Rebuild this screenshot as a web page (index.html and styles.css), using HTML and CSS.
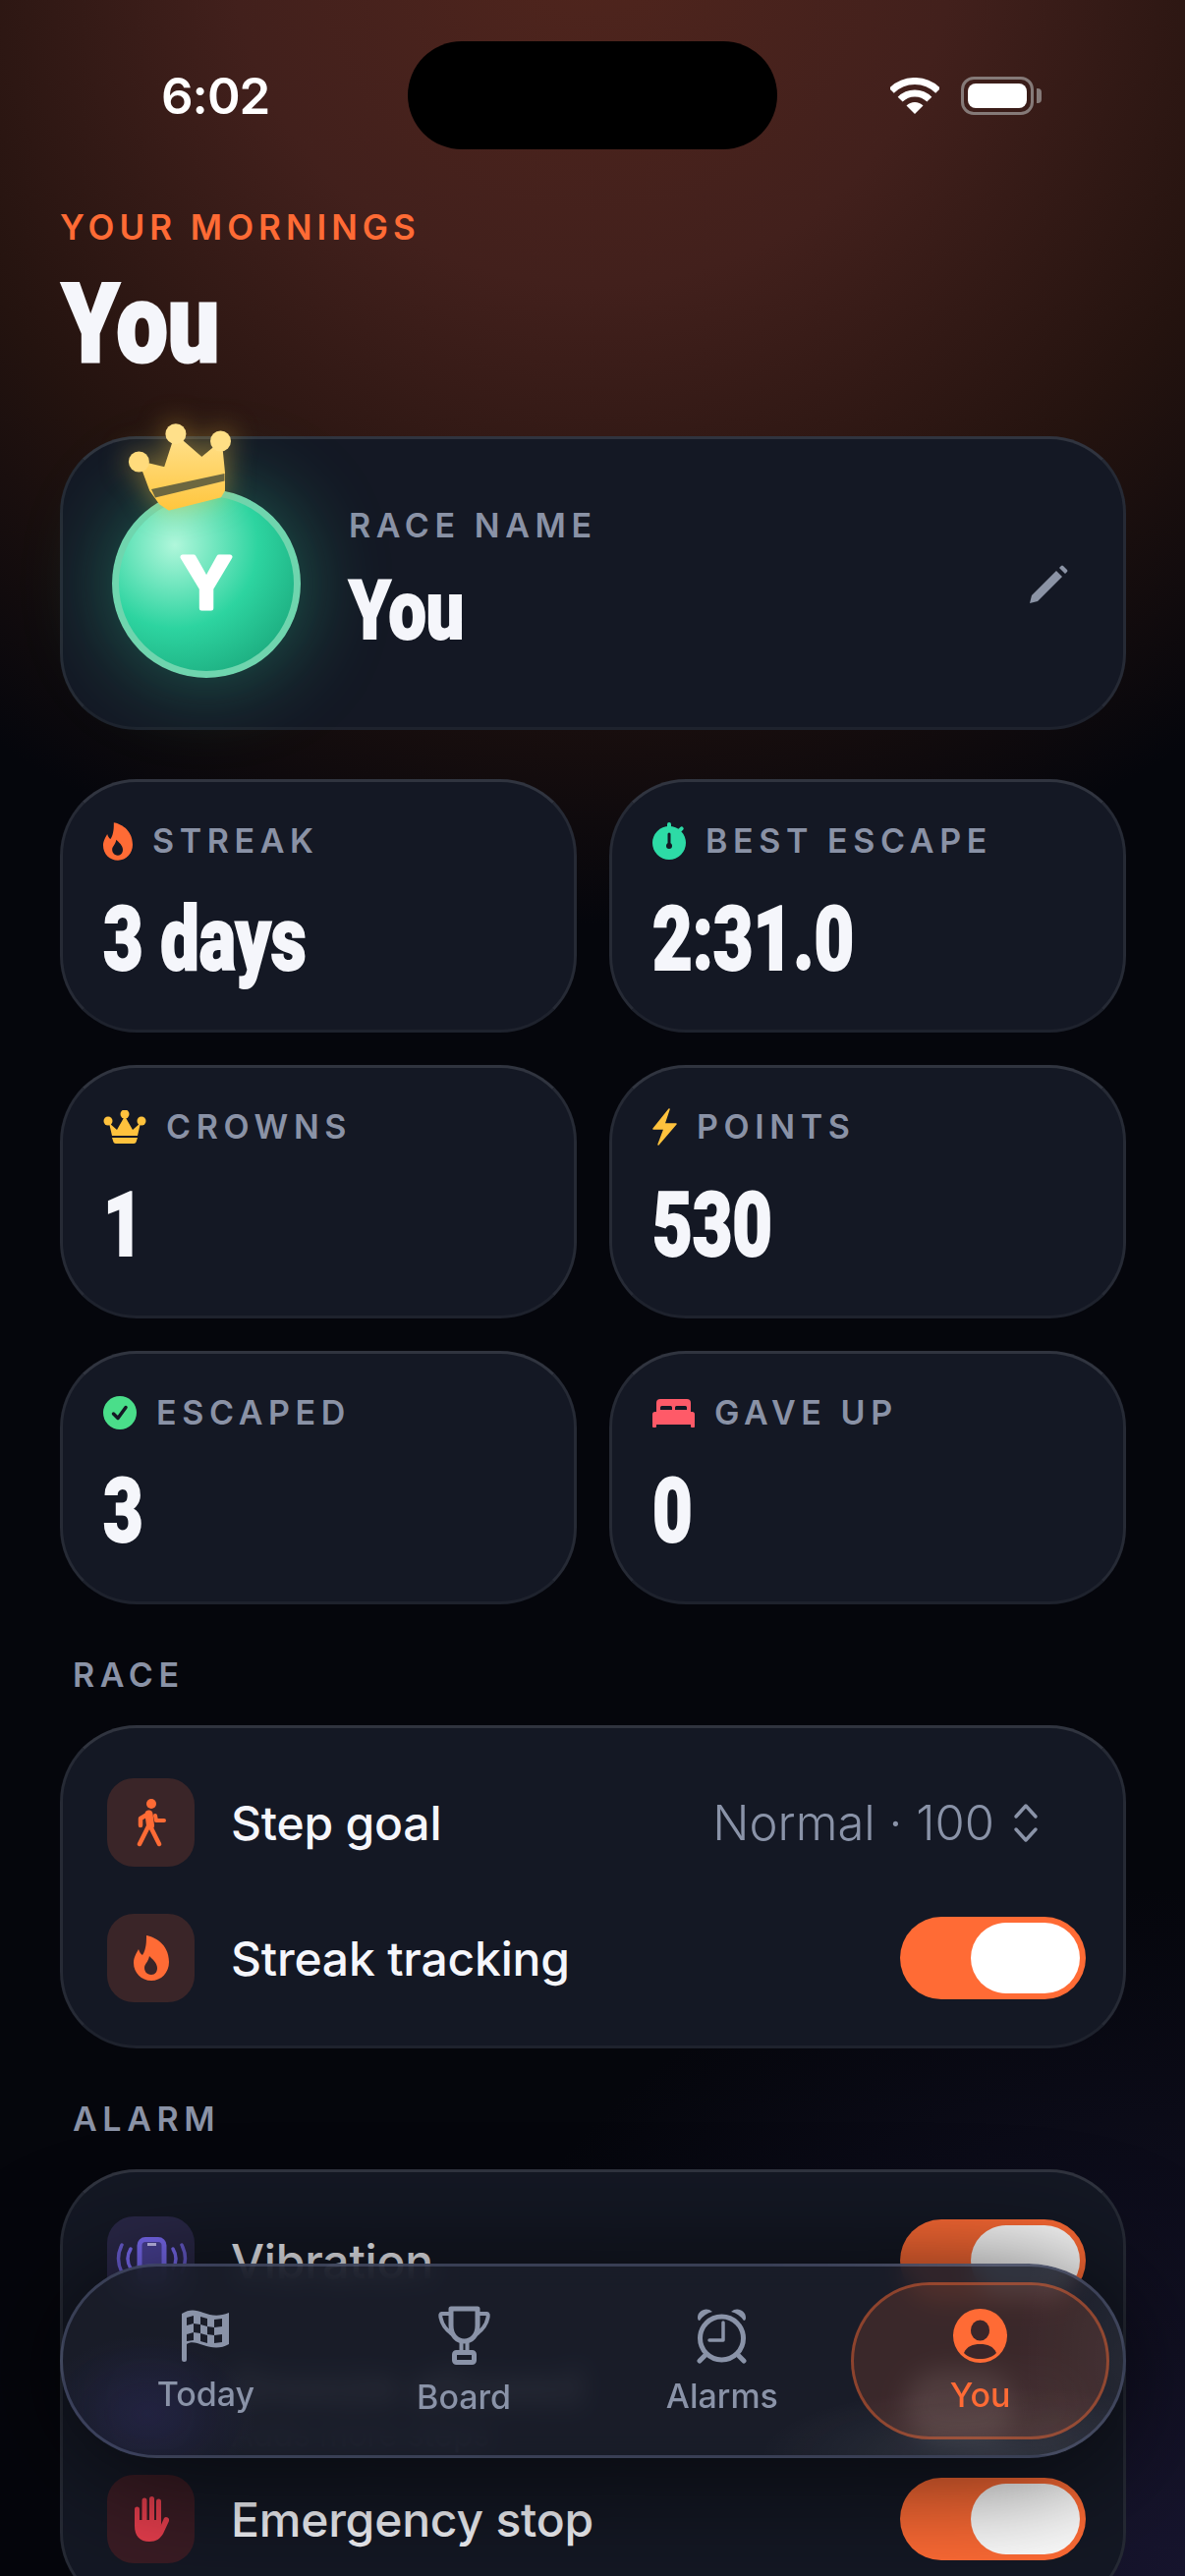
FILE: index.html
```html
<!DOCTYPE html>
<html>
	<head>
		<meta charset="utf-8">
		<title>You</title>
		<link rel="stylesheet" href="styles.css">
	</head>
	<body>
		<div class="screen">
			<div class="status">
				<span class="time">6:02</span>
				<span class="island"></span>
				<span class="status-icons">
					<svg width="50" height="37" viewBox="0 0 50 37" fill="none" stroke="#fff" stroke-width="7"><path d="M1.3 13.3A33.5 33.5 0 0 1 48.7 13.3"/><path d="M10.15 22.15A21 21 0 0 1 39.85 22.15"/><path d="M25 37L16.5 28.5A12 12 0 0 1 33.5 28.5Z" fill="#fff" stroke="none"/></svg>
					<span class="battery"><span class="battery-fill"></span></span>
				</span>
			</div>

			<div class="content">
				<div class="eyebrow">YOUR MORNINGS</div>
				<h1 class="title"><span class="squeeze">You</span></h1>

				<div class="card hero">
					<div class="avatar">
						<svg class="avatar-letter" width="100" height="100" viewBox="0 0 100 100"><text x="50" y="75" text-anchor="middle">Y</text></svg>
						<svg class="crown" width="120" height="100" viewBox="120 430 120 100">
							<defs><linearGradient id="gold" x1="0" y1="0" x2="0" y2="1"><stop offset="0" stop-color="#ffe08a"/><stop offset="1" stop-color="#ffc63f"/></linearGradient></defs>
							<path fill="url(#gold)" stroke="url(#gold)" stroke-width="3" stroke-linejoin="round" d="M143.3 472L168.2 478L178.9 445L205.3 468L224.5 452L227.5 482V500L224 506L172 519L163 513L153.7 500Z"/>
							<circle cx="141.4" cy="471" r="10.5" fill="#ffdb7c"/>
							<circle cx="178.9" cy="442.7" r="10.5" fill="#ffe08a"/>
							<circle cx="224.5" cy="450" r="10.5" fill="#ffdf85"/>
							<path fill="#6c6740" d="M154 499L228.5 483V490.5L158 507.5Z"/>
						</svg>
					</div>
					<div class="hero-text">
						<div class="label">RACE NAME</div>
						<div class="hero-name"><span class="squeeze">You</span></div>
					</div>
					<svg class="pencil" width="40" height="40" viewBox="0 0 40 40" fill="#8b93a5"><path d="M0 40L2 32L27 7L33 13L8 38Z"/><path d="M30 4L32 2Q33 1 34 2L38 6Q39 7 38 8L36 10Z"/></svg>
				</div>

				<div class="stats">
					<div class="card stat">
						<div class="stat-head">
							<svg width="30" height="39" viewBox="0 0 36 46" fill="#ff6b35" fill-rule="evenodd"><path d="M13 0C20 1 36 8 36 27C36 38 28 46 18 46C8 46 0 38 0 28C0 22 3 18 5 14C6 17 7 19 9 20C13 14 13 6 13 0ZM18 40C13 40 11 36 11 33C11 29 15 27 16 21C19 24 24 28 24 33C24 37 22 40 18 40Z"/></svg>
							<span class="label">STREAK</span>
						</div>
						<div class="value"><span class="squeeze">3 days</span></div>
					</div>
					<div class="card stat">
						<div class="stat-head">
							<svg width="34" height="38" viewBox="0 0 34 38"><circle cx="17" cy="21" r="17" fill="#2ddba6"/><rect x="15" y="0" width="4" height="7" rx="2" fill="#2ddba6"/><rect x="27" y="4" width="4" height="7" rx="2" fill="#2ddba6" transform="rotate(45 29 7)"/><path d="M17 12V23" stroke="#141824" stroke-width="3" stroke-linecap="round"/><circle cx="17" cy="24" r="3" fill="#141824"/></svg>
							<span class="label">BEST ESCAPE</span>
						</div>
						<div class="value"><span class="squeeze">2:31.0</span></div>
					</div>
					<div class="card stat">
						<div class="stat-head">
							<svg width="44" height="34" viewBox="0 0 44 34" fill="#ffc23d"><circle cx="5" cy="11" r="4.5"/><circle cx="22" cy="4" r="4.5"/><circle cx="39" cy="11" r="4.5"/><path d="M6 13L14 20L22 6L30 20L38 13L35 26H9Z"/><path d="M9 28H35L34 31Q33.500 34 31 34H13Q10.500 34 10 31Z"/></svg>
							<span class="label">CROWNS</span>
						</div>
						<div class="value"><span class="squeeze">1</span></div>
					</div>
					<div class="card stat">
						<div class="stat-head">
							<svg width="25" height="38" viewBox="0 0 25 38" fill="#ffc23d" stroke="#ffc23d" stroke-width="1.500" stroke-linejoin="round"><path d="M17 1L1 21H12L6 37L24 16H12Z"/></svg>
							<span class="label">POINTS</span>
						</div>
						<div class="value"><span class="squeeze">530</span></div>
					</div>
					<div class="card stat">
						<div class="stat-head">
							<svg width="34" height="34" viewBox="0 0 34 34"><circle cx="17" cy="17" r="17" fill="#4ade8a"/><path d="M10.500 18L15 22.500L23 11.500" fill="none" stroke="#141824" stroke-width="3.500" stroke-linecap="round" stroke-linejoin="round"/></svg>
							<span class="label">ESCAPED</span>
						</div>
						<div class="value"><span class="squeeze">3</span></div>
					</div>
					<div class="card stat">
						<div class="stat-head">
							<svg width="43" height="29" viewBox="0 0 43 29" fill="#ff5a68"><path d="M8 0H35A4 4 0 0 1 39 4V13H4V4A4 4 0 0 1 8 0Z"/><path d="M8 11V8.500Q8 7 9.500 7H18.500Q20 7 20 8.500V11ZM23 11V8.500Q23 7 24.500 7H33.500Q35 7 35 8.500V11Z" fill="#141824"/><rect x="0" y="13" width="43" height="13" rx="2.500"/><rect x="0" y="24" width="4" height="5" rx="1"/><rect x="39" y="24" width="4" height="5" rx="1"/></svg>
							<span class="label">GAVE UP</span>
						</div>
						<div class="value"><span class="squeeze">0</span></div>
					</div>
				</div>

				<div class="label section-label">RACE</div>
				<div class="card list">
					<div class="row">
						<span class="tile tile-orange">
							<svg width="30" height="49" viewBox="0 0 30 49" fill="none" stroke="#ff6b35" stroke-linecap="round" stroke-linejoin="round"><circle cx="15" cy="5" r="5" fill="#ff6b35" stroke="none"/><path d="M12.500 15.500L14 27" stroke-width="8"/><path d="M9 17L4 20V27" stroke-width="4.500"/><path d="M19 17L20 22H28" stroke-width="4"/><path d="M12 28L3 46" stroke-width="4.500"/><path d="M14 28L23 46" stroke-width="4.500"/></svg>
						</span>
						<span class="row-name">Step goal</span>
						<span class="row-value">Normal · 100</span>
						<svg class="chevrons" width="30" height="41" viewBox="0 0 30 41" fill="none" stroke="#8a93a8" stroke-width="3.500" stroke-linecap="round" stroke-linejoin="round"><path d="M5 14L15 3L25 14"/><path d="M5 27L15 38L25 27"/></svg>
					</div>
					<div class="row">
						<span class="tile tile-orange">
							<svg width="36" height="46" viewBox="0 0 36 46" fill="#ff6b35" fill-rule="evenodd"><path d="M13 0C20 1 36 8 36 27C36 38 28 46 18 46C8 46 0 38 0 28C0 22 3 18 5 14C6 17 7 19 9 20C13 14 13 6 13 0ZM18 40C13 40 11 36 11 33C11 29 15 27 16 21C19 24 24 28 24 33C24 37 22 40 18 40Z"/></svg>
						</span>
						<span class="row-name">Streak tracking</span>
						<span class="toggle"><span class="thumb"></span></span>
					</div>
				</div>

				<div class="label section-label">ALARM</div>
				<div class="card list list-alarm">
					<div class="row">
						<span class="tile tile-purple">
							<svg width="74" height="48" viewBox="0 0 74 48" fill="none" stroke="#7b6cf6"><rect x="25" y="2.500" width="25" height="44" rx="6" fill="#4b4399" stroke-width="5"/><path d="M33 7.500H42" stroke="#c9c4f5" stroke-width="3"/><path d="M16 12Q10 22 16 32M59 32Q65 22 59 12" stroke-width="3.500" stroke-linecap="round"/><path d="M7 8Q0 22 7 36M68 36Q75 22 68 8" stroke-width="3.500" stroke-linecap="round" opacity=".8"/></svg>
						</span>
						<span class="row-name">Vibration</span>
						<span class="toggle"><span class="thumb"></span></span>
					</div>
					<div class="row row-middle">
						<span class="tile tile-purple"></span>
						<span class="row-text">
							<span class="row-name">Snooze allowed</span>
							<span class="row-sub">Adds more steps</span>
						</span>
						<span class="toggle toggle-off"><span class="thumb"></span></span>
					</div>
					<div class="row">
						<span class="tile tile-red">
							<svg width="36" height="46" viewBox="0 0 36 46" fill="#e63e4d" stroke-linecap="round"><path d="M1 24H27.500V30L31 22A3 3 0 0 1 36 25L30 38C27 43 23 46 16 46C6 46 1 40 1 30Z"/><path d="M3.500 13V28M11 4V25M18.500 2.500V25M25.500 5V28" stroke="#e63e4d" stroke-width="5"/></svg>
						</span>
						<span class="row-name">Emergency stop</span>
						<span class="toggle"><span class="thumb"></span></span>
					</div>
				</div>
			</div>

			<div class="nav">
				<div class="tab">
					<svg width="48" height="53" viewBox="0 0 48 53"><path d="M0 4C8 -1 14 0 22 3C30 6 38 7 48 3V35C40 40 30 39 22 36C14 33 9 32 5 35V50.500A2.500 2.500 0 0 1 0 50.500Z" fill="#8a93a8"/><path fill="#1a1d29" d="M5 8l7-2v8l-7 2zM19 7l7 2v8l-7-2zM33 10l8-1v8l-8 1zM12 14l7 1v9l-7-1zM26 17l7 1v8l-7-1zM19 24l7 2v8l-7-2zM33 26l8-1v8l-8 1zM5 25l7-2v8l-7 1z"/></svg>
					<span>Today</span>
				</div>
				<div class="tab">
					<svg width="53" height="60" viewBox="0 0 53 60" fill="none" stroke="#8a93a8" stroke-width="5" stroke-linejoin="round"><path d="M13 3H40V20C40 30 34 36 26.500 36C19 36 13 30 13 20Z"/><path d="M13 8H3.500C2.500 8 2 9 2.500 12C4 20 8 25 16 30M40 8H49.500C50.500 8 51 9 50.500 12C49 20 45 25 37 30" stroke-width="4"/><path d="M23.500 36V48M29.500 36V48" stroke-width="4"/><rect x="16.500" y="47.500" width="20" height="10" rx="2"/></svg>
					<span>Board</span>
				</div>
				<div class="tab">
					<svg width="51" height="57" viewBox="0 0 51 57" fill="none" stroke="#8a93a8" stroke-linecap="round" stroke-linejoin="round"><circle cx="25.500" cy="31" r="22" stroke-width="5"/><path d="M27 15V33H13" stroke-width="3.500"/><path d="M8 49L3 54M43 49L48 54" stroke-width="5"/><path d="M1 10C1 4 7 0 13 2L16 4Q8 6 3 13Q1 13 1 10ZM50 10C50 4 44 0 38 2L35 4Q43 6 48 13Q50 13 50 10Z" fill="#8a93a8" stroke="none"/></svg>
					<span>Alarms</span>
				</div>
				<div class="tab tab-active">
					<svg width="55" height="55" viewBox="0 0 55 55"><circle cx="27.500" cy="27.500" r="27.500" fill="#ff6b35"/><ellipse cx="27.500" cy="22" rx="9.500" ry="10.500" fill="#3c2629"/><path d="M11 45C14 38 20 36 27.500 36C35 36 41 38 44 45C40 49 34 51 27.500 51C21 51 15 49 11 45Z" fill="#3c2629"/></svg>
					<span>You</span>
				</div>
			</div>
		</div>
	</body>
</html>
```

FILE: styles.css
```css
*{margin: 0;padding: 0;box-sizing: border-box;}
html,body{
	width: 1206px;
	height: 2622px;
	overflow: hidden;
	background: #05060c;
}
body{
	font-family: Inter, "Noto Sans", sans-serif;
	color: #f5f6fb;
}
.screen{
	position: relative;
	width: 1206px;
	height: 2622px;
	overflow: hidden;
	background:
		radial-gradient(ellipse 1050px 1000px at 50% -60px, #50251d 0%, #42201c 35%, #24130f 68%, rgba(10,8,12,0) 100%),
		radial-gradient(ellipse 800px 700px at 100% 100%, #17152e 0%, rgba(20,18,40,0) 100%),
		#05060c;
}

/* status bar */
.status{
	display: grid;
	grid-template-columns: 1fr 376px 1fr;
	align-items: center;
	padding-top: 42px;
	height: 152px;
}
.time{
	font-size: 51px;
	font-weight: 600;
	letter-spacing: -1px;
	color: #fff;
	padding-left: 164px;
}
.island{
	height: 110px;
	border-radius: 55px;
	background: #000;
}
.status-icons{
	display: flex;
	align-items: center;
	gap: 22px;
	padding-left: 115px;
}
.battery{
	position: relative;
	width: 74px;
	height: 39px;
	padding: 4px;
	border: 3px solid #857a78;
	border-radius: 13px;
}
.battery:after{
	content: "";
	position: absolute;
	right: -11px;
	top: 9px;
	width: 5px;
	height: 15px;
	border-radius: 0 4px 4px 0;
	background: #857a78;
}
.battery-fill{
	display: block;
	height: 100%;
	border-radius: 8px;
	background: #fff;
}

.content{
	padding: 0 60px 0 61px;
}
.eyebrow{
	margin-top: 58px;
	font-size: 35px;
	line-height: 42px;
	font-weight: 600;
	letter-spacing: 5px;
	color: #ff6b35;
}
.squeeze{
	display: inline-block;
	font-family: Roboto, "Liberation Sans", sans-serif;
	font-weight: 900;
	transform-origin: left center;
	transform: scaleX(.78);
	white-space: nowrap;
	-webkit-text-stroke: 2px #f5f6fb;
}
.title{
	margin-top: 12px;
	height: 128px;
	font-size: 112px;
	line-height: 126px;
	font-weight: 900;
	padding-left: 2px;
}
.title .squeeze{
	transform: scaleX(.83);
	-webkit-text-stroke-width: 3px;
}

.card{
	background: #141824;
	border: 3px solid;
	border-color: #30343f #262a35 #1e222d;
	border-radius: 78px;
}
.label{
	font-size: 34px;
	line-height: 40px;
	font-weight: 600;
	letter-spacing: 5.6px;
	color: #8a92a6;
}

/* hero */
.hero{
	display: flex;
	align-items: center;
	gap: 49px;
	height: 299px;
	margin-top: 52px;
	padding: 0 55px 0 50px;
}
.avatar{
	position: relative;
	flex: none;
	width: 192px;
	height: 192px;
	display: flex;
	align-items: center;
	justify-content: center;
	border: 7px solid #6fd5ae;
	border-radius: 50%;
	background: radial-gradient(circle at 32% 28%, #b0f7db 0%, #2dd4a0 48%, #159a70 100%);
	box-shadow: 0 0 90px rgba(45,212,160,.42);
}
.avatar-letter text{
	font-family: Inter, sans-serif;
	font-size: 72px;
	font-weight: 600;
	fill: #fff;
	stroke: #fff;
	stroke-width: 5;
	stroke-linejoin: round;
}
.crown{
	position: absolute;
	left: -1px;
	top: -76px;
	overflow: visible;
	filter: drop-shadow(0 0 14px rgba(255,190,60,.5));
}
.hero-text{
	flex: 1;
	padding-bottom: 11px;
}
.hero-name{
	margin-top: 23px;
	height: 84px;
	font-size: 83px;
	line-height: 84px;
}
.hero-name .squeeze{
	transform: scaleX(.82);
}
.pencil{
	flex: none;
}

/* stats */
.stats{
	display: grid;
	grid-template-columns: 1fr 1fr;
	grid-auto-rows: 258px;
	gap: 33px;
	margin-top: 50px;
}
.stat{
	padding: 40px 41px 0;
}
.stat-head{
	display: flex;
	align-items: center;
	gap: 20px;
	height: 40px;
}
.value{
	margin-top: 29px;
	height: 100px;
	font-size: 90px;
	line-height: 100px;
}

/* lists */
.section-label{
	margin-top: 52px;
	padding-left: 13px;
}
.list{
	display: flex;
	flex-direction: column;
	gap: 48px;
	margin-top: 31px;
	padding: 51px 38px 44px 45px;
}
.list-alarm{
	gap: 0;
	padding-top: 45px;
}
.row{
	display: flex;
	align-items: center;
	height: 90px;
}
.row-middle{
	margin: 57px 0 26px;
}
.tile{
	flex: none;
	display: flex;
	align-items: center;
	justify-content: center;
	width: 89px;
	height: 90px;
	margin-right: 37px;
	border-radius: 27px;
}
.tile-orange{background: #3a2528;}
.tile-purple{background: #2a2848;}
.tile-red{background: #3a1c24;}
.row-name{
	flex: 1;
	font-size: 48px;
	font-weight: 500;
	letter-spacing: -.2px;
	white-space: nowrap;
}
.row-text{
	flex: 1;
	display: flex;
	flex-direction: column;
}
.row-sub{
	font-size: 33px;
	color: #8a92a6;
}
.row-value{
	font-size: 49px;
	font-weight: 300;
	color: #8a93a8;
}
.chevrons{
	flex: none;
	margin: 0 46px 0 17px;
}
.toggle{
	flex: none;
	display: flex;
	justify-content: flex-end;
	width: 189px;
	height: 84px;
	padding: 6px;
	border-radius: 42px;
	background: #ff6b35;
}
.toggle-off{
	justify-content: flex-start;
	background: #3a3d48;
}
.thumb{
	width: 111px;
	height: 72px;
	border-radius: 36px;
	background: #fff;
}

/* tab bar */
.nav{
	position: absolute;
	left: 61px;
	right: 60px;
	bottom: 120px;
	display: grid;
	grid-template-columns: repeat(4,1fr);
	height: 198px;
	padding: 16px 14px;
	border: 3px solid rgba(110,120,160,.38);
	border-radius: 99px;
	background:
		radial-gradient(ellipse 110px 80px at 8% 78%, rgba(70,60,170,.16), rgba(70,60,170,0)),
		radial-gradient(ellipse 240px 70px at 88% 100%, rgba(255,255,255,.1), rgba(255,255,255,0)),
		radial-gradient(ellipse 110px 200px at 100% 50%, rgba(255,255,255,.05), rgba(255,255,255,0)),
		rgba(26,29,41,.9);
	backdrop-filter: blur(12px);
	box-shadow: 0 12px 130px rgba(0,0,0,.75);
}
.tab{
	display: flex;
	flex-direction: column;
	align-items: center;
	justify-content: center;
	gap: 14px;
	border: 3px solid transparent;
	border-radius: 80px;
	font-size: 34px;
	line-height: 38px;
	font-weight: 500;
	color: #8a93a8;
}
.tab-active{
	border-color: rgba(255,107,53,.42);
	background: rgba(255,107,53,.15);
	color: #ff6b35;
}
```
